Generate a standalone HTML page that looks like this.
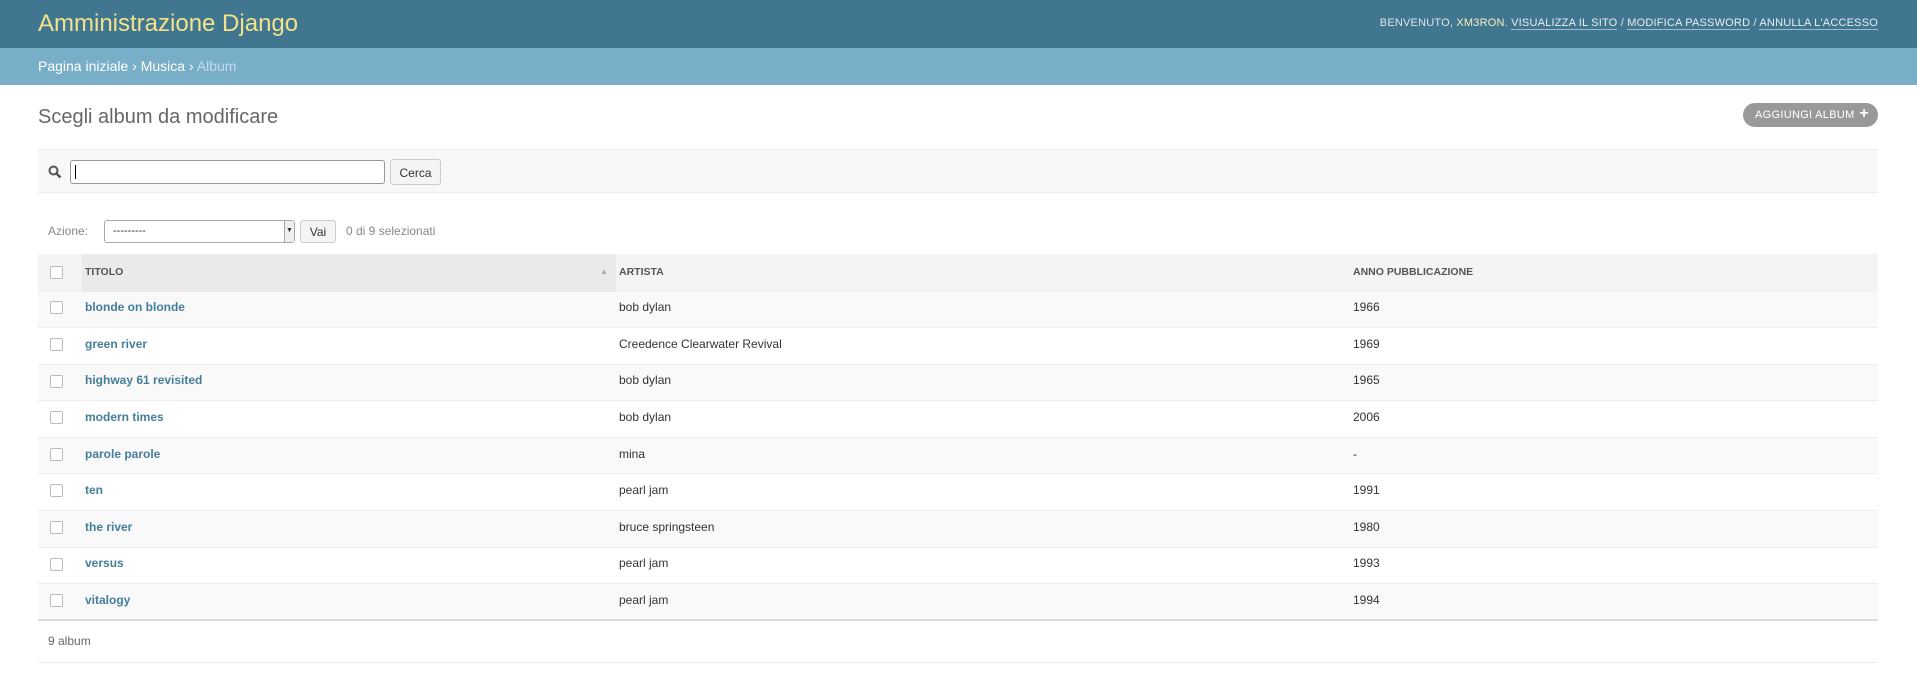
<!DOCTYPE html>
<html><head><meta charset="utf-8"><style>
*{box-sizing:border-box;margin:0;padding:0}
body{width:1917px;height:682px;overflow:hidden;background:#fff;font-family:"Liberation Sans",sans-serif;font-size:13px;color:#333}
#header{height:48px;background:#417690;position:relative}
#header h1{position:absolute;left:38px;top:10px;font-size:24px;font-weight:normal;color:#f2e28a}
#tools{position:absolute;right:39px;top:17px;font-size:11px;color:#d9e6ea;letter-spacing:.2px}
#tools b{color:#f5f0c0;font-weight:normal}
#tools a{color:#e6eef2;text-decoration:none;border-bottom:1px solid rgba(255,255,255,.5)}
#bc{height:37px;background:#79aec8;padding:10px 38px;font-size:14px;color:#fff}
#bc .g{color:#c4dce8}
h2{position:absolute;left:38px;top:106px;font-size:20px;font-weight:300;color:#666}
.add{position:absolute;left:1743px;top:103px;width:135px;height:24px;border-radius:12px;background:#999;color:#fff;font-size:11px;padding:6px 0 0 12px;letter-spacing:.3px}
.add span{position:absolute;right:9px;top:2px;font-size:16px;font-weight:bold}
.search{position:absolute;left:38px;top:149px;width:1840px;height:44px;background:#f8f8f8;border-top:1px solid #eee;border-bottom:1px solid #eee}
.inp{position:absolute;left:32px;top:10px;width:315px;height:24px;border:1px solid #999;border-radius:3px;background:#fff}
.btn{position:absolute;background:#f4f4f4;border:1px solid #ccc;border-radius:3px;font-size:12px;color:#333;text-align:center}
.act{position:absolute;top:224px;font-size:12px;color:#888}
table{position:absolute;left:38px;top:254px;width:1840px;border-collapse:collapse}
th{height:37px;background:#f4f4f4;text-align:left;font-size:10.5px;color:#555;padding-left:3px;border-bottom:1px solid #eee}
td{height:36.6px;border-bottom:1px solid #eee;padding-left:3px;font-size:12px;padding-bottom:4px}
tr:nth-child(even) td{background:#f9f9f9}
td a{color:#447e9b;font-weight:bold;text-decoration:none}
.cb{display:inline-block;width:13px;height:13px;border:1px solid #bbb;border-radius:2px;background:#fff;vertical-align:middle}
tr:last-child td{border-bottom:2px solid #ddd}
.foot{position:absolute;left:38px;top:624px;width:1840px;height:39px;border-bottom:1px solid #eee;padding:10px 10px;color:#666;font-size:12px}
</style></head><body>
<div id="header"><h1>Amministrazione Django</h1>
<div id="tools">BENVENUTO, <b>XM3RON</b>. <a>VISUALIZZA IL SITO</a> / <a>MODIFICA PASSWORD</a> / <a>ANNULLA L'ACCESSO</a></div></div>
<div id="bc">Pagina iniziale › Musica › <span class="g">Album</span></div>
<h2>Scegli album da modificare</h2>
<div class="add">AGGIUNGI ALBUM<span>+</span></div>
<div class="search">
<svg style="position:absolute;left:10px;top:15px" width="14" height="14" viewBox="0 0 14 14"><circle cx="5.5" cy="5.5" r="4" fill="none" stroke="#555" stroke-width="2"/><path d="M8.5 8.5L12.5 12.5" stroke="#555" stroke-width="2.5"/></svg>
<div class="inp"><div style="position:absolute;left:4px;top:4px;width:1px;height:14px;background:#000"></div></div>
<div class="btn" style="left:352px;top:9px;width:51px;height:26px;padding-top:6px">Cerca</div>
</div>
<div class="act" style="left:48px">Azione:</div>
<div style="position:absolute;left:104px;top:220px;width:191px;height:23px;border:1px solid #aaa;border-radius:3px;font-size:11px;padding:4px 8px">---------<div style="position:absolute;right:0;top:0;width:10px;height:21px;border-left:1px solid #aaa;background:#eee;font-size:7px;padding-top:6px;text-align:center">▼</div></div>
<div class="btn" style="left:300px;top:220px;width:36px;height:23px;padding-top:4px">Vai</div>
<div class="act" style="left:346px">0 di 9 selezionati</div>
<table>
<tr><th style="width:44px;padding-left:12px"><span class="cb"></span></th><th style="width:534px;background:#eaeaea;position:relative">TITOLO<span style="position:absolute;right:8px;top:13px;font-size:8px;color:#aaa">▲</span></th><th style="width:734px">ARTISTA</th><th>ANNO PUBBLICAZIONE</th></tr>
<tr><td style="padding-left:12px"><span class="cb"></span></td><td><a>blonde on blonde</a></td><td>bob dylan</td><td>1966</td></tr>
<tr><td style="padding-left:12px"><span class="cb"></span></td><td><a>green river</a></td><td>Creedence Clearwater Revival</td><td>1969</td></tr>
<tr><td style="padding-left:12px"><span class="cb"></span></td><td><a>highway 61 revisited</a></td><td>bob dylan</td><td>1965</td></tr>
<tr><td style="padding-left:12px"><span class="cb"></span></td><td><a>modern times</a></td><td>bob dylan</td><td>2006</td></tr>
<tr><td style="padding-left:12px"><span class="cb"></span></td><td><a>parole parole</a></td><td>mina</td><td>-</td></tr>
<tr><td style="padding-left:12px"><span class="cb"></span></td><td><a>ten</a></td><td>pearl jam</td><td>1991</td></tr>
<tr><td style="padding-left:12px"><span class="cb"></span></td><td><a>the river</a></td><td>bruce springsteen</td><td>1980</td></tr>
<tr><td style="padding-left:12px"><span class="cb"></span></td><td><a>versus</a></td><td>pearl jam</td><td>1993</td></tr>
<tr><td style="padding-left:12px"><span class="cb"></span></td><td><a>vitalogy</a></td><td>pearl jam</td><td>1994</td></tr>
</table>
<div class="foot">9 album</div>
</body></html>
